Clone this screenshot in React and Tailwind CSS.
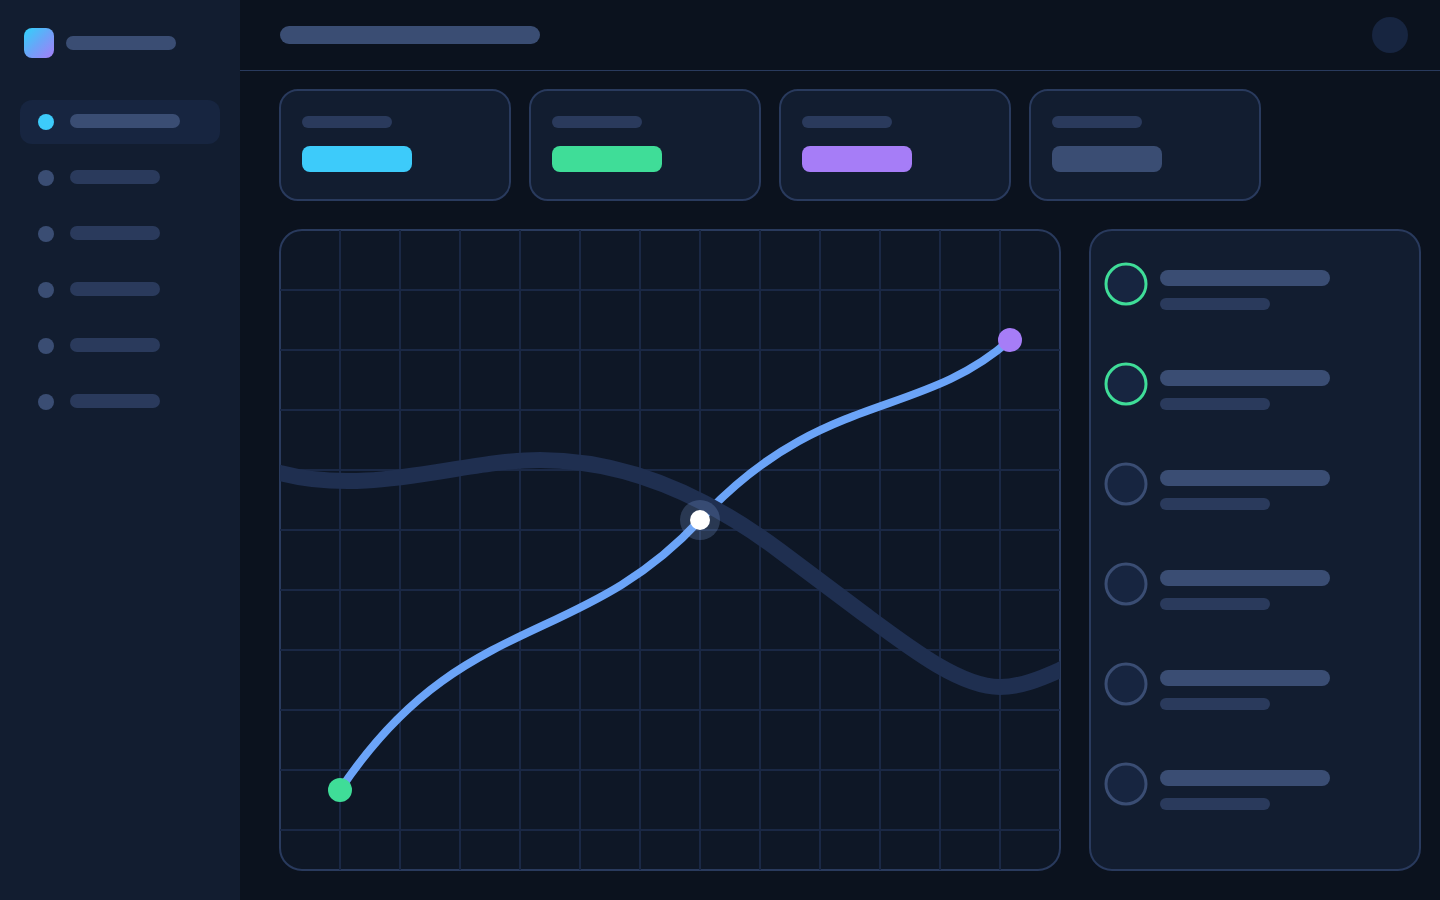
import React from 'react';

const NAV_ITEMS = ['Overview', 'Activity', 'Reports', 'Projects', 'Team', 'Settings'];

const STATS = ['bg-[#3dcbfa]', 'bg-[#3fdd98]', 'bg-[#a67df7]', 'bg-[#3a4d73]'];

const MEMBERS = [
  { id: 1, online: true },
  { id: 2, online: true },
  { id: 3, online: false },
  { id: 4, online: false },
  { id: 5, online: false },
  { id: 6, online: false },
];

const Sidebar = () => {
  return (
    <aside className="w-60 shrink-0 bg-[#121d30] px-5 pt-7">
      <div className="flex items-center gap-3 px-1">
        <svg viewBox="0 0 30 30" className="size-[30px]" aria-hidden="true">
          <defs>
            <linearGradient id="logo" x1="0" y1="0" x2="1" y2="1">
              <stop offset="0" stopColor="#2fd3fb" />
              <stop offset="0.5" stopColor="#6ba4f8" />
              <stop offset="1" stopColor="#a67df7" />
            </linearGradient>
          </defs>
          <rect width="30" height="30" rx="8" fill="url(#logo)" />
        </svg>
        <div className="h-3.5 w-[110px] rounded-full bg-[#3a4d73]" />
      </div>

      <nav className="mt-[42px] flex flex-col gap-3">
        {NAV_ITEMS.map((label, i) => (
          <a
            key={label}
            href="#"
            aria-label={label}
            aria-current={i === 0 ? 'page' : undefined}
            className={`flex h-11 items-start gap-4 rounded-xl px-[18px] pt-3.5 ${i === 0 ? 'bg-[#172540]' : ''}`}
          >
            <span className={`size-4 rounded-full ${i === 0 ? 'bg-[#3dcbfa]' : 'bg-[#3a4d73]'}`} />
            <span
              className={`h-3.5 rounded-full ${i === 0 ? 'w-[110px] bg-[#3a4d73]' : 'w-[90px] bg-[#2a3a5c]'}`}
            />
          </a>
        ))}
      </nav>
    </aside>
  );
};

const Chart = () => {
  const columns = [...Array(12)].map((_, i) => 340 + i * 60);
  const rows = [...Array(10)].map((_, i) => 290 + i * 60);

  return (
    <svg viewBox="279 229 782 642" className="block h-auto min-w-0 flex-1" role="img" aria-label="Trend chart">
      <defs>
        <clipPath id="plot">
          <rect x="280" y="230" width="780" height="640" rx="22" />
        </clipPath>
      </defs>
      <rect x="280" y="230" width="780" height="640" rx="22" fill="#0e1726" stroke="#293a5d" strokeWidth="2" />
      <g clipPath="url(#plot)" fill="none">
        {/* Grid */}
        <g stroke="#1a2845" strokeWidth="2">
          {columns.map((x) => (
            <path key={x} d={`M${x} 230V870`} />
          ))}
          {rows.map((y) => (
            <path key={y} d={`M280 ${y}H1060`} />
          ))}
        </g>
        {/* Series */}
        <path
          d="M340 790C460 610 580 650 700 520S920 420 1010 340"
          stroke="#6ba4f8"
          strokeWidth="8"
          strokeLinecap="round"
        />
        <path
          d="M270 470L280 473C372 497 460 460 540 460C620 460 700 491 780 551L860 611C910 648 960 687 1000 687C1020 687 1040 679 1060 670L1070 665"
          stroke="#1f2f50"
          strokeWidth="16"
        />
      </g>
      {/* Points */}
      <circle cx="340" cy="790" r="12" fill="#3fdd98" />
      <circle cx="700" cy="520" r="20" fill="#8fb0f0" fillOpacity="0.22" />
      <circle cx="700" cy="520" r="10" fill="#fff" />
      <circle cx="1010" cy="340" r="12" fill="#a67df7" />
    </svg>
  );
};

const MemberList = () => {
  return (
    <ul className="flex w-[332px] shrink-0 flex-col gap-[52px] rounded-[23px] border-2 border-[#293a5d] bg-[#121d30] px-[13px] pt-[31px]">
      {MEMBERS.map((member) => (
        <li key={member.id} className="flex items-start gap-3">
          <svg viewBox="0 0 44 44" className="size-11 shrink-0" aria-hidden="true">
            <circle
              cx="22"
              cy="22"
              r="20"
              fill="#172540"
              stroke={member.online ? '#3fdd98' : '#3a4d73'}
              strokeWidth="3"
            />
          </svg>
          <div className="flex flex-col gap-3 pt-2">
            <div className="h-4 w-[170px] rounded-full bg-[#3a4d73]" />
            <div className="h-3 w-[110px] rounded-full bg-[#2a3a5c]" />
          </div>
        </li>
      ))}
    </ul>
  );
};

const App = () => {
  return (
    <div className="flex min-h-screen bg-[#0b121e]">
      <Sidebar />

      <div className="min-w-0 flex-1">
        <header className="flex h-[71px] items-center justify-between border-b border-[#293a5d] pr-8 pl-10">
          <div className="h-[18px] w-[260px] rounded-full bg-[#3a4d73]" />
          <button type="button" aria-label="Account" className="size-9 rounded-full bg-[#172540]" />
        </header>

        <main className="flex flex-col gap-7 pt-[18px] pr-[19px] pb-7 pl-[39px]">
          {/* Stat cards */}
          <section className="flex gap-[18px]">
            {STATS.map((color) => (
              <div
                key={color}
                className="flex h-28 w-[232px] flex-col gap-[18px] rounded-[19px] border-2 border-[#293a5d] bg-[#121d30] px-[21px] pt-[25px]"
              >
                <div className="h-3 w-[90px] rounded-full bg-[#2a3a5c]" />
                <div className={`h-[26px] w-[110px] rounded-lg ${color}`} />
              </div>
            ))}
          </section>

          {/* Chart + members */}
          <section className="flex gap-7">
            <Chart />
            <MemberList />
          </section>
        </main>
      </div>
    </div>
  );
};

export default App;
